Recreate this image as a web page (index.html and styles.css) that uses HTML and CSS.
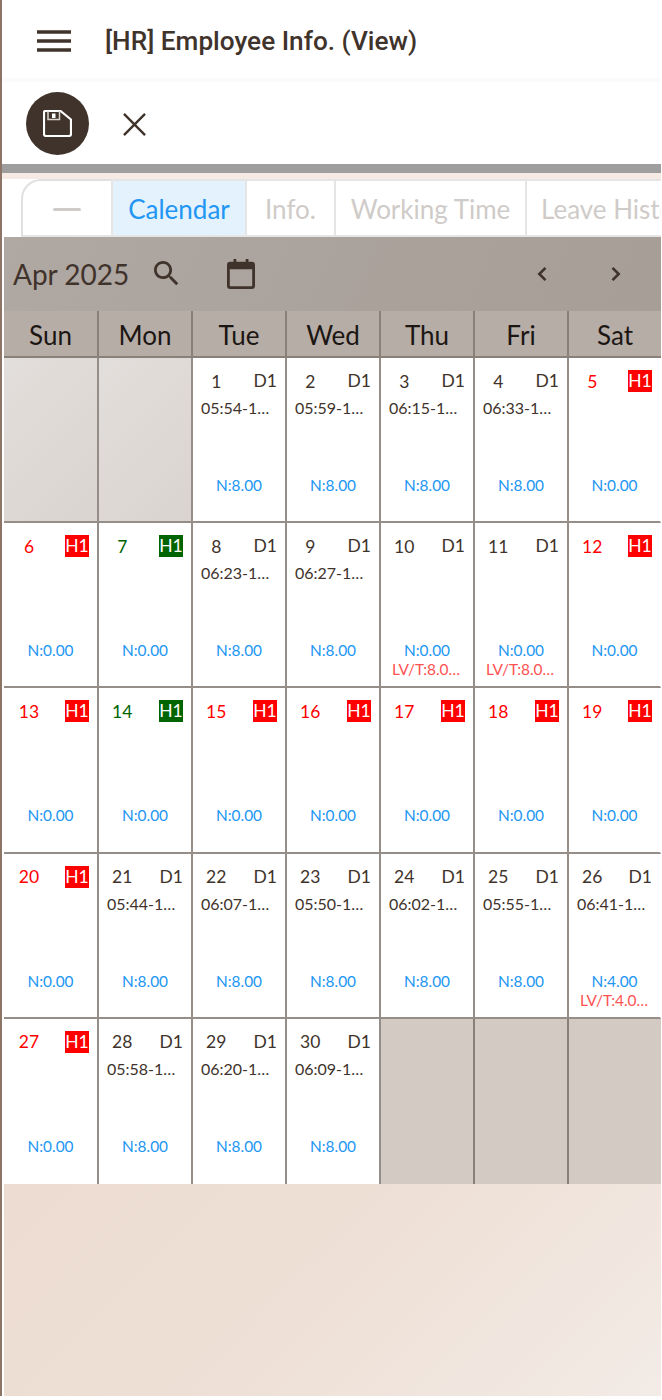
FILE: index.html
```html
<!DOCTYPE html>
<html lang="en">
<head>
<meta charset="utf-8">
<title>[HR] Employee Info. (View)</title>
<link rel="stylesheet" href="styles.css">
</head>
<body>
<div class="app">
  <header class="topbar">
    <svg class="menu-icon" viewBox="0 0 34 22"><path d="M0 2h34M0 11h34M0 20h34"/></svg>
    <h1 class="title">[HR] Employee Info. (View)</h1>
  </header>
  <div class="actions">
    <button class="save-btn" aria-label="Save">
      <svg viewBox="0 0 29 27"><path class="save-out" d="M2.500 1h15l10.500 8.500V24a2 2 0 0 1-2 2H3a2 2 0 0 1-2-2V2.500A1.500 1.500 0 0 1 2.500 1z"/><path class="save-tab" d="M5 1v8.500h11.500V1"/><path class="save-fill" d="M9 3.500h3.500v4.500H9z"/></svg>
    </button>
    <svg class="close-icon" viewBox="0 0 24 24"><path d="M1 1l22 22M23 1L1 23"/></svg>
  </div>
  <div class="divider"></div>
  <div class="strip"></div>
  <nav class="tabs">
    <div class="tab tab-collapse"><span class="dash"></span></div>
    <div class="tab tab-active">Calendar</div>
    <div class="tab tab-info">Info.</div>
    <div class="tab tab-work">Working Time</div>
    <div class="tab tab-leave">Leave History</div>
  </nav>
  <div class="cal-toolbar">
    <span class="month">Apr 2025</span>
    <svg class="ic-search" viewBox="3 3 18 18"><path d="M15.500 14h-.79l-.28-.27C15.410 12.590 16 11.110 16 9.500 16 5.910 13.090 3 9.500 3S3 5.910 3 9.500 5.910 16 9.500 16c1.610 0 3.090-.59 4.230-1.570l.27.28v.79l5 4.990L20.490 19l-4.990-5zm-6 0C7.010 14 5 11.990 5 9.500S7.010 5 9.500 5 14 7.010 14 9.500 11.990 14 9.500 14z"/></svg>
    <svg class="ic-cal" viewBox="0 0 30 32"><path d="M7 0h3v3h10V0h3v3h3.500A3.500 3.500 0 0 1 30 6.500v22a3.500 3.500 0 0 1-3.500 3.500h-23A3.500 3.500 0 0 1 0 28.500v-22A3.500 3.500 0 0 1 3.500 3H7zM3 11v17.500a.5.5 0 0 0 .5.5h23a.5.5 0 0 0 .5-.5V11z"/></svg>
    <span class="nav-space"></span>
    <svg class="ic-prev" viewBox="0 0 12 16"><path d="M9.500 1.800L3.300 8l6.200 6.200"/></svg>
    <svg class="ic-next" viewBox="0 0 12 16"><path d="M2.500 1.800L8.700 8l-6.200 6.200"/></svg>
  </div>
  <div class="grid head">
    <div class="dow">Sun</div><div class="dow">Mon</div><div class="dow">Tue</div><div class="dow">Wed</div><div class="dow">Thu</div><div class="dow">Fri</div><div class="dow">Sat</div>
  </div>
  <div class="grid days">
    <div class="cell off"></div>
    <div class="cell off"></div>
    <div class="cell"><div class="top"><span class="d">1</span><span class="s">D1</span></div><div class="time">05:54-15:00</div><div class="n">N:8.00</div></div>
    <div class="cell"><div class="top"><span class="d">2</span><span class="s">D1</span></div><div class="time">05:59-15:00</div><div class="n">N:8.00</div></div>
    <div class="cell"><div class="top"><span class="d">3</span><span class="s">D1</span></div><div class="time">06:15-15:00</div><div class="n">N:8.00</div></div>
    <div class="cell"><div class="top"><span class="d">4</span><span class="s">D1</span></div><div class="time">06:33-15:00</div><div class="n">N:8.00</div></div>
    <div class="cell"><div class="top"><span class="d red">5</span><span class="s hol">H1</span></div><div class="n">N:0.00</div></div>

    <div class="cell"><div class="top"><span class="d red">6</span><span class="s hol">H1</span></div><div class="n">N:0.00</div></div>
    <div class="cell"><div class="top"><span class="d green">7</span><span class="s hol-g">H1</span></div><div class="n">N:0.00</div></div>
    <div class="cell"><div class="top"><span class="d">8</span><span class="s">D1</span></div><div class="time">06:23-15:00</div><div class="n">N:8.00</div></div>
    <div class="cell"><div class="top"><span class="d">9</span><span class="s">D1</span></div><div class="time">06:27-15:00</div><div class="n">N:8.00</div></div>
    <div class="cell"><div class="top"><span class="d">10</span><span class="s">D1</span></div><div class="n">N:0.00</div><div class="lv">LV/T:8.00000</div></div>
    <div class="cell"><div class="top"><span class="d">11</span><span class="s">D1</span></div><div class="n">N:0.00</div><div class="lv">LV/T:8.00000</div></div>
    <div class="cell"><div class="top"><span class="d red">12</span><span class="s hol">H1</span></div><div class="n">N:0.00</div></div>

    <div class="cell"><div class="top"><span class="d red">13</span><span class="s hol">H1</span></div><div class="n">N:0.00</div></div>
    <div class="cell"><div class="top"><span class="d green">14</span><span class="s hol-g">H1</span></div><div class="n">N:0.00</div></div>
    <div class="cell"><div class="top"><span class="d red">15</span><span class="s hol">H1</span></div><div class="n">N:0.00</div></div>
    <div class="cell"><div class="top"><span class="d red">16</span><span class="s hol">H1</span></div><div class="n">N:0.00</div></div>
    <div class="cell"><div class="top"><span class="d red">17</span><span class="s hol">H1</span></div><div class="n">N:0.00</div></div>
    <div class="cell"><div class="top"><span class="d red">18</span><span class="s hol">H1</span></div><div class="n">N:0.00</div></div>
    <div class="cell"><div class="top"><span class="d red">19</span><span class="s hol">H1</span></div><div class="n">N:0.00</div></div>

    <div class="cell"><div class="top"><span class="d red">20</span><span class="s hol">H1</span></div><div class="n">N:0.00</div></div>
    <div class="cell"><div class="top"><span class="d">21</span><span class="s">D1</span></div><div class="time">05:44-15:00</div><div class="n">N:8.00</div></div>
    <div class="cell"><div class="top"><span class="d">22</span><span class="s">D1</span></div><div class="time">06:07-15:00</div><div class="n">N:8.00</div></div>
    <div class="cell"><div class="top"><span class="d">23</span><span class="s">D1</span></div><div class="time">05:50-15:00</div><div class="n">N:8.00</div></div>
    <div class="cell"><div class="top"><span class="d">24</span><span class="s">D1</span></div><div class="time">06:02-15:00</div><div class="n">N:8.00</div></div>
    <div class="cell"><div class="top"><span class="d">25</span><span class="s">D1</span></div><div class="time">05:55-15:00</div><div class="n">N:8.00</div></div>
    <div class="cell"><div class="top"><span class="d">26</span><span class="s">D1</span></div><div class="time">06:41-15:00</div><div class="n">N:4.00</div><div class="lv">LV/T:4.00000</div></div>

    <div class="cell last"><div class="top"><span class="d red">27</span><span class="s hol">H1</span></div><div class="n">N:0.00</div></div>
    <div class="cell last"><div class="top"><span class="d">28</span><span class="s">D1</span></div><div class="time">05:58-15:00</div><div class="n">N:8.00</div></div>
    <div class="cell last"><div class="top"><span class="d">29</span><span class="s">D1</span></div><div class="time">06:20-15:00</div><div class="n">N:8.00</div></div>
    <div class="cell last"><div class="top"><span class="d">30</span><span class="s">D1</span></div><div class="time">06:09-15:00</div><div class="n">N:8.00</div></div>
    <div class="cell last off2"></div>
    <div class="cell last off2"></div>
    <div class="cell last off2"></div>
  </div>
  <div class="fill"></div>
</div>
</body>
</html>
```
FILE: styles.css
```css
* { box-sizing: border-box; }
html, body { margin: 0; padding: 0; background: #fff; }
body { width: 662px; height: 1400px; overflow: hidden; font-family: "Lato", sans-serif; color: #40332b; }
.app { width: 662px; height: 1396px; display: flex; flex-direction: column; padding-right: 1px; border-left: 2px solid #8c7567; padding-left: 2px; }

.topbar { margin-left: -2px; display: flex; align-items: center; background: #fff; border-bottom: 4px solid #fbfbfb; box-sizing: content-box; flex: none; height: 78px; }
.menu-icon { width: 34px; height: 22px; margin-left: 35px; margin-top: 4px; fill: none; stroke: #40332b; stroke-width: 3.500; }
.title { margin: 4px 0 0 34px; font: 500 26.200px "Roboto", sans-serif; color: #40332b; white-space: nowrap; }

.actions { height: 82px; flex: none; display: flex; align-items: center; margin-left: -2px; }
.save-btn { width: 63px; height: 63px; margin-left: 24px; border: 0; padding: 0; border-radius: 50%; background: #40332b; display: flex; align-items: center; justify-content: center; }
.save-btn svg { width: 29px; height: 27px; }
.save-out { fill: none; stroke: #fff; stroke-width: 2.200; }
.save-tab { fill: none; stroke: #d9d4d0; stroke-width: 1.500; }
.save-fill { fill: #fff; }
.close-icon { width: 23px; height: 23px; margin-left: 34px; margin-top: 3px; fill: none; stroke: #40332b; stroke-width: 2.500; }

.divider { height: 9px; flex: none; background: #9e9e9e; margin-left: -2px; }
.strip { height: 6px; flex: none; background: #f5ebe4; margin-left: -2px; }

.tabs { height: 58px; flex: none; display: flex; overflow: hidden; background: #fff; }
.tab { flex: none; height: 100%; display: flex; align-items: center; justify-content: center; padding-top: 2px; font-size: 26px; color: #cfcbc8; border-right: 2px solid #e5e5e5; border-bottom: 2px solid #e5e5e5; white-space: nowrap; }
.tab-collapse { width: 92px; margin-left: 17px; border-left: 2px solid #e0e0e0; border-top: 2px solid #e0e0e0; border-top-left-radius: 20px; }
.dash { display: block; width: 28px; height: 3px; border-radius: 2px; background: #cfcbc8; }
.tab-active { width: 134px; background: #e3f2fd; color: #2196f3; border-top: 2px solid #e5e5e5; }
.tab-info { width: 89px; border-top: 2px solid #e5e5e5; }
.tab-work { width: 191px; border-top: 2px solid #e5e5e5; }
.tab-leave { width: 190px; border-top: 2px solid #e5e5e5; justify-content: flex-start; padding-left: 14px; border-right: 0; }

.cal-toolbar { height: 74px; flex: none; display: flex; align-items: center; background: linear-gradient(115deg, #afa8a3 0%, #aaa19b 60%, #a89e98 100%); }
.month { font-size: 28px; color: #40332b; margin-left: 9px; width: 139px; white-space: nowrap; }
.ic-search { width: 25px; height: 25px; fill: #40332b; margin-left: 2px; margin-top: -2px; }
.ic-cal { width: 28px; height: 30px; fill: #40332b; margin-left: 48px; }
.nav-space { flex: 1; }
.ic-prev, .ic-next { width: 12px; height: 16px; fill: none; stroke: #40332b; stroke-width: 2.600; }
.ic-prev { margin-right: 62px; }
.ic-next { margin-right: 39px; }

.grid { display: grid; grid-template-columns: 95px repeat(5, 94px) 1fr; flex: none; }
.head { height: 47px; background: #b6ada7; border-bottom: 2px solid #8a807a; }
.dow { display: flex; align-items: center; justify-content: center; padding-top: 2px; font-size: 26px; color: #1c1613; border-right: 2px solid #8a807a; }
.dow:last-child { border-right: 0; }

.days { grid-auto-rows: 165.200px; background: #fff; }
.cell { position: relative; display: flex; flex-direction: column; background: #fff; border-right: 2px solid #958d88; border-bottom: 2px solid #958d88; min-width: 0; }
.cell:nth-child(7n) { border-right: 1px solid transparent; }
.cell.last { border-bottom: 0; }
.off { background: linear-gradient(135deg, #e2dedb 0%, #dad4d0 100%); }
.off2 { background: #d4cac4; border-right-color: #8a807a; }

.top { display: grid; grid-template-columns: 46.500px 1fr; align-items: center; height: 24px; margin-top: 11px; font-size: 17.500px; }
.cell:nth-child(7n+1) .top { grid-template-columns: 50px 1fr; }
.d { text-align: center; }
.s { justify-self: end; margin-right: 8px; line-height: 22px; color: #40332b; }
.red { color: #ff0000; }
.green { color: #006400; }
.hol { background: #ff0000; color: #fff; width: 24px; text-align: center; }
.hol-g { background: #006400; color: #fff; width: 24px; text-align: center; }
.time { margin: 5px 9px 0 8px; font-size: 16px; line-height: 20px; color: #40332b; white-space: nowrap; overflow: hidden; text-overflow: ellipsis; }
.n { position: absolute; left: 0; right: 0; top: 117px; text-align: center; font-size: 15.400px; line-height: 20px; color: #2196f3; }
.lv { position: absolute; left: 11px; right: 6px; top: 136px; text-align: left; font-size: 15.400px; line-height: 20px; color: #ff5252; white-space: nowrap; overflow: hidden; text-overflow: ellipsis; }

.fill { flex: 1; background: linear-gradient(135deg, #ecdcd1 0%, #eee0d6 50%, #f3ebe6 100%); }
```
